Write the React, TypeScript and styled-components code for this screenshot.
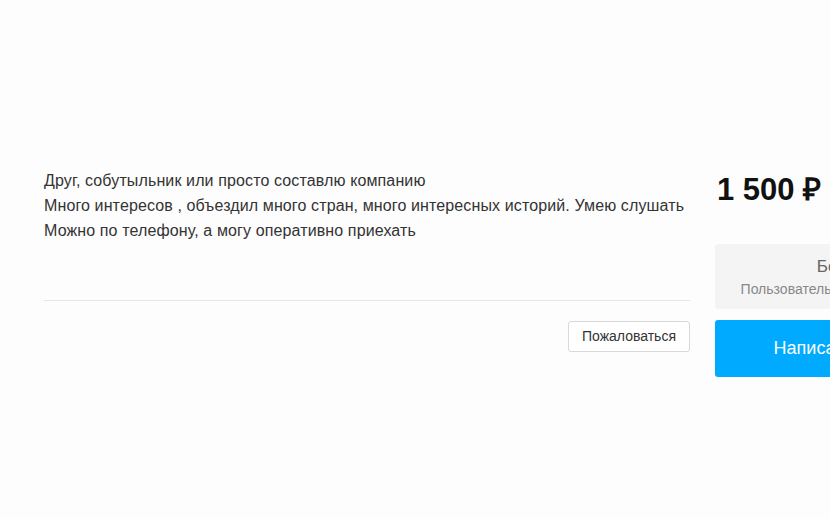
import styled, { createGlobalStyle } from "styled-components";

const GlobalStyle = createGlobalStyle`
  html, body {
    margin: 0;
    padding: 0;
    background: #fff;
    overflow: hidden;
  }
  body {
    font-family: "Liberation Sans", Arial, sans-serif;
  }
`;

const App = () => {
  return (
    <>
      <GlobalStyle />
      <Page>
        <Layout>
          <Main>
            <Description>
              <p>Друг, собутыльник или просто составлю компанию</p>
              <p>Много интересов , объездил много стран, много интересных историй. Умею слушать</p>
              <p>Можно по телефону, а могу оперативно приехать</p>
            </Description>
            <Divider />
            <Actions>
              <ReportButton>Пожаловаться</ReportButton>
            </Actions>
          </Main>
          <Side>
            <Price>1 500 ₽</Price>
            <SellerBox>
              <SellerName>Богдан С.</SellerName>
              <SellerNote>Пользователь на сайте с 2017 года</SellerNote>
            </SellerBox>
            <WriteButton>Написать продавцу</WriteButton>
          </Side>
        </Layout>
      </Page>
    </>
  );
};

export default App;

const Page = styled.div`
  width: 830px;
  height: 519px;
  background: #fdfdfd;
  overflow: hidden;
`;

const Layout = styled.div`
  display: flex;
  gap: 25px;
  padding: 168px 0 0 44px;
  width: 1200px;
`;

const Main = styled.div`
  width: 646px;
  flex-shrink: 0;
`;

const Description = styled.div`
  font-size: 16px;
  letter-spacing: 0.12px;
  line-height: 25px;
  color: #333;
  p {
    margin: 0;
    white-space: nowrap;
  }
`;

const Divider = styled.div`
  margin-top: 57px;
  height: 1px;
  background: #e6e6e6;
`;

const Actions = styled.div`
  display: flex;
  justify-content: flex-end;
  padding-top: 20px;
`;

const ReportButton = styled.button`
  all: unset;
  box-sizing: border-box;
  height: 31px;
  padding: 0 13px;
  border: 1px solid #d9d9d9;
  border-radius: 3px;
  background: #fff;
  font-family: "Liberation Sans", Arial, sans-serif;
  font-size: 14px;
  line-height: 29px;
  color: #333;
`;

const Side = styled.div`
  width: 280px;
  flex-shrink: 0;
  display: flex;
  flex-direction: column;
`;

const Price = styled.div`
  margin-top: 4px;
  font-size: 31px;
  font-weight: 700;
  line-height: 36px;
  color: #111;
  padding-left: 2px;
`;

const SellerBox = styled.div`
  margin-top: 36px;
  height: 65px;
  border-radius: 4px;
  background: #f4f4f4;
  display: flex;
  flex-direction: column;
  align-items: center;
  justify-content: center;
  gap: 4px;
`;

const SellerName = styled.div`
  font-size: 17px;
  color: #666;
  white-space: nowrap;
`;

const SellerNote = styled.div`
  font-size: 14px;
  color: #888;
  white-space: nowrap;
`;

const WriteButton = styled.button`
  all: unset;
  margin-top: 11px;
  height: 57px;
  border-radius: 3px;
  background: #00aaff;
  color: #fff;
  font-family: "Liberation Sans", Arial, sans-serif;
  font-size: 18px;
  text-align: center;
  line-height: 57px;
`;
